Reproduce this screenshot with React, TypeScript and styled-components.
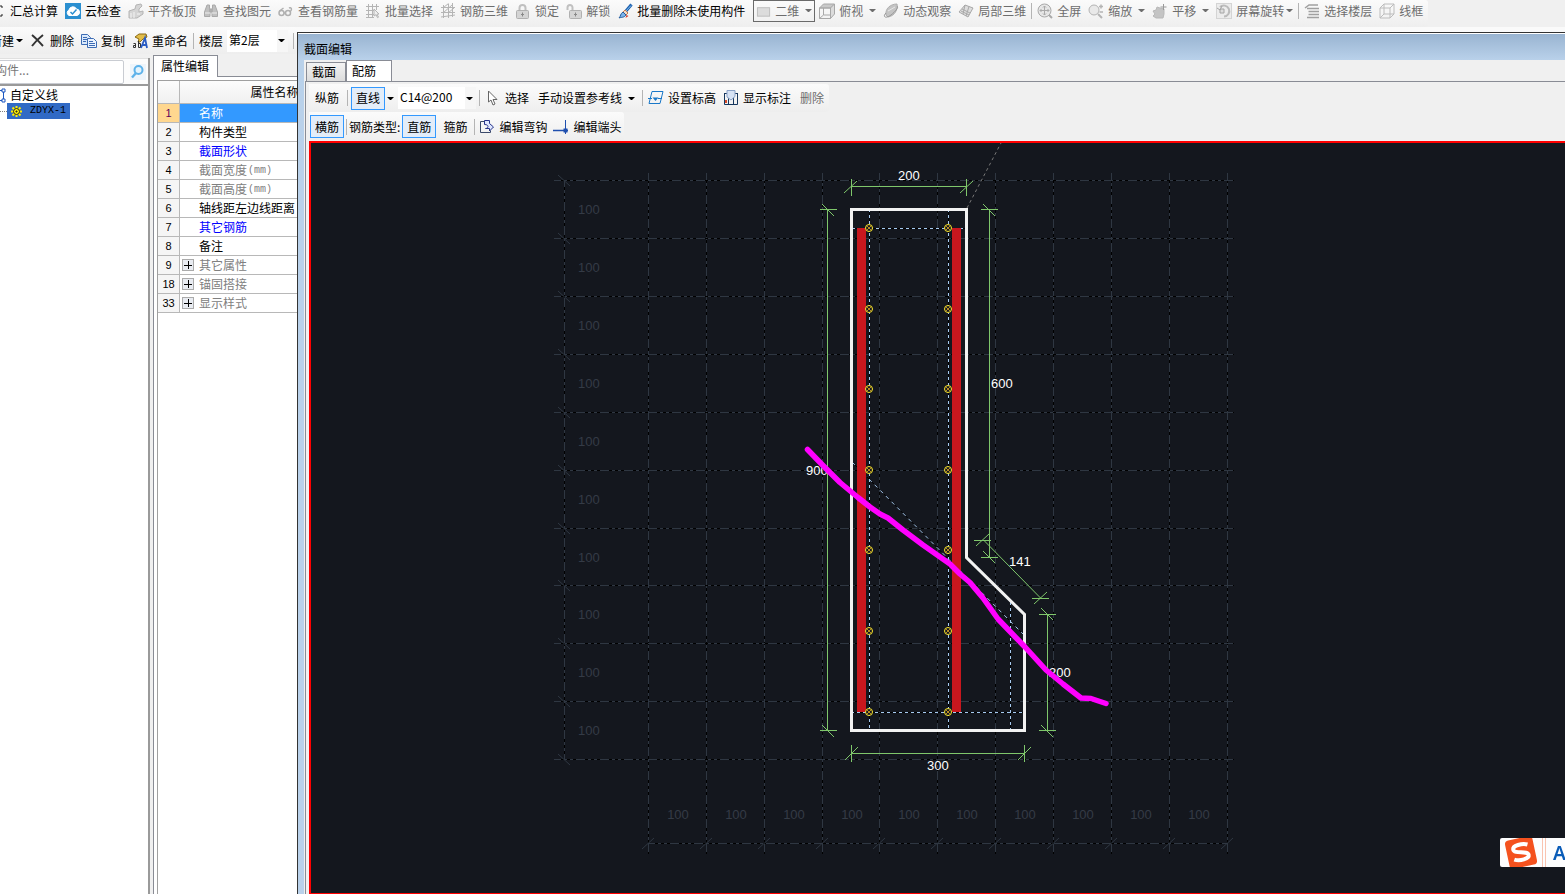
import React from 'react';
import styled, { createGlobalStyle, css } from 'styled-components';

const GlobalStyle = createGlobalStyle`
  * { box-sizing: border-box; }
  body {
    margin: 0;
    background: #f0f0f0;
    color: #000;
    font: 12px/16px "Noto Sans CJK SC", sans-serif;
  }
  button, input, select { font: inherit; color: inherit; }
`;

/* ---------- shell ---------- */
const Shell = styled.div`
  display: flex;
  flex-direction: column;
  height: 100vh;
  overflow: hidden;
`;
const Workspace = styled.main`
  flex: 1;
  display: flex;
  min-height: 0;
  background: linear-gradient(#fafafa 5px, #f0f0f0 5px);
`;
const Explorer = styled.section`
  width: 297px;
  flex: none;
  display: flex;
  flex-direction: column;
  overflow: hidden;
`;
const Panels = styled.div`
  flex: 1;
  display: flex;
  min-height: 0;
`;

/* ---------- toolbars ---------- */
const TopStrip = styled.header`
  height: 27px;
  flex: none;
  overflow: hidden;
  background: #f0f0f0;
`;
const ToolRow = styled.div<{ $h: number; $gap?: number; $shift?: boolean; $inset?: boolean }>`
  display: flex;
  align-items: center;
  width: max-content;
  height: ${p => p.$h}px;
  gap: ${p => p.$gap ?? 7}px;
  padding: 0 5px 6px 0;
  border-radius: 0 3px 3px 0;
  background: linear-gradient(#fbfbfb, #eeeeee);
  ${p => p.$shift && css`margin-left: -10px;`}
  ${p => p.$inset && css`padding: 0 1px;`}
`;
const ExplorerTools = styled(ToolRow)`
  padding-bottom: 0;
`;
const ToolButton = styled.button<{ $off?: boolean; $pad?: number }>`
  display: flex;
  align-items: center;
  gap: 4px;
  flex: none;
  height: 22px;
  padding: 0 ${p => p.$pad ?? 0}px;
  border: 0;
  background: none;
  color: ${p => (p.$off ? '#6d6d6d' : '#000')};
  white-space: nowrap;
`;
const Toggle = styled.button<{ $on?: boolean }>`
  flex: none;
  height: 23px;
  padding: 0 4px;
  border: 1px solid ${p => (p.$on ? '#3399ff' : 'transparent')};
  background: ${p => (p.$on ? '#e3edf9' : 'none')};
  white-space: nowrap;
`;
const Separator = styled.span<{ $snug?: boolean }>`
  flex: none;
  width: 1px;
  height: 16px;
  margin: 0 ${p => (p.$snug ? -2 : 0)}px;
  background: #b4b4b4;
`;
const Caret = styled.i<{ $tight?: boolean }>`
  width: 7px;
  margin-left: ${p => (p.$tight ? -2 : 2)}px;
  border: solid transparent;
  border-width: 3px 3px 0;
  border-top-color: currentColor;
`;
const DropButton = styled.button`
  display: flex;
  padding: 8px 1px;
  border: 0;
  background: none;
`;
const ModeButton = styled(ToolButton)`
  width: 62px;
  padding: 0 2px;
  margin: 0 -3px 0 1px;
  border: 1px solid #6a6a6a;
`;
const ComboBox = styled.span<{ $w: number }>`
  position: relative;
  display: flex;
  align-items: center;
  width: ${p => p.$w}px;
  height: 22px;
  background: linear-gradient(to left, #f6f6f6 11px, #fff 11px);
  & > i { position: absolute; right: 3px; pointer-events: none; }
`;
const Select = styled.select`
  appearance: none;
  width: 100%;
  height: 22px;
  padding: 0 2px 2px;
  border: 0;
  background: none;
`;
const Field = styled.div`
  display: flex;
  align-items: center;
  gap: 4px;
`;
const Label = styled.label`
  white-space: nowrap;
`;

/* ---------- component tree ---------- */
const TreePanel = styled.aside`
  width: 150px;
  flex: none;
  display: flex;
  flex-direction: column;
  margin-top: 4px;
  border-right: 2px solid #9a9a9a;
  background: #fff;
`;
const SearchBar = styled.div`
  display: flex;
  align-items: center;
  gap: 6px;
  height: 28px;
  flex: none;
  margin-left: -40px;
  border-top: 1px solid #e0e0e0;
  border-bottom: 2px solid #9a9a9a;
  background: #fcfcfc;
`;
const SearchInput = styled.input`
  width: 164px;
  height: 24px;
  padding: 0 0 4px 10px;
  border: 1px solid #c9ccd2;
  border-radius: 2px;
  background: #fff;
  &::placeholder { color: #777; opacity: 1; }
`;
const SearchButton = styled.button`
  display: flex;
  padding: 0;
  border: 0;
  background: #eef5fb;
`;
const Tree = styled.ul`
  margin: 0;
  padding: 1px 0;
  list-style: none;
`;
const TreeItem = styled.li`
  display: flex;
  align-items: center;
  gap: 4px;
  height: 16px;
  margin-left: -10px;
`;
const TreeChild = styled.li`
  display: flex;
  align-items: center;
  height: 16px;
  &::before { content: ''; width: 7px; border-top: 1px dotted #808080; }
`;
const TreeSelected = styled.span`
  display: flex;
  align-items: center;
  gap: 8px;
  width: 63px;
  height: 16px;
  padding-left: 4px;
  background: #316ac5;
  font: 10px/18px "Liberation Mono", monospace;
`;

/* ---------- properties ---------- */
const PropertyPanel = styled.section`
  flex: 1;
  min-width: 0;
  display: flex;
  flex-direction: column;
  margin: 1px 0 0 3px;
`;
const PropertyTab = styled.h2`
  align-self: flex-start;
  width: 65px;
  height: 22px;
  margin: 0 0 -1px;
  padding: 0 7px;
  border: 1px solid #898c95;
  border-width: 1px 1px 0;
  background: #fff;
  font: inherit;
  line-height: 19px;
  z-index: 1;
  white-space: nowrap;
`;
const PropertyBody = styled.div`
  flex: 1;
  overflow: hidden;
  padding: 3px 0 0 3px;
  border: 1px solid #898c95;
  border-width: 1px 0 0 1px;
  background: #fff;
`;
const TableClip = styled.div`
  height: 100%;
  overflow: hidden;
  border: 1px solid #a0a0a0;
  border-width: 1px 0 0 1px;
`;
const Table = styled.table`
  width: 212px;
  table-layout: fixed;
  border-collapse: separate;
  border-spacing: 0;
`;
const HeadCell = styled.th<{ $w: number }>`
  width: ${p => p.$w}px;
  height: 23px;
  padding: 0;
  border: solid #b8b8b8;
  border-width: 0 1px 1px 0;
  background: linear-gradient(#fcfcfc, #f0f0f0);
  font-weight: 400;
`;
const NumberCell = styled.th<{ $on?: boolean }>`
  height: 19px;
  padding: 0;
  border: solid #b8b8b8;
  border-width: 0 1px 1px 0;
  background: ${p => (p.$on ? '#ffd78f' : '#f5f5f5')};
  color: ${p => (p.$on ? '#5c005c' : '#000')};
  font: 11px/18px "Liberation Sans", sans-serif;
`;
const NameCell = styled.td<{ $tone: Tone; $on?: boolean }>`
  height: 19px;
  padding: 0 0 0 2px;
  border-bottom: 1px solid #b8b8b8;
  background: ${p => (p.$on ? '#3399ff' : '#fff')};
  color: ${p => ({ black: '#000', blue: '#0000ff', gray: '#808080', white: '#fff' })[p.$tone]};
  line-height: 20px;
  white-space: nowrap;
`;
const NameRow = styled.div`
  display: flex;
  align-items: center;
  height: 18px;
`;
const Expander = styled.span`
  width: 17px;
  flex: none;
  display: flex;
`;
const ExpandButton = styled.button`
  display: flex;
  padding: 0;
  border: 0;
  background: none;
`;
const Unit = styled.span`
  padding: 2px 0 0 1px;
  font: 10px/18px "Liberation Mono", monospace;
`;

/* ---------- section editor ---------- */
const Dialog = styled.section`
  flex: 1;
  min-width: 0;
  display: flex;
  flex-direction: column;
  margin-top: 5px;
  border: 1px solid #333;
  border-width: 1px 0 0 1px;
  background: #b9d1ea;
`;
const DialogTitle = styled.h1`
  height: 27px;
  flex: none;
  margin: 0;
  padding: 7px 6px 0;
  border-top: 1px solid #fff;
  background: linear-gradient(#99b4d1, #b9d1ea);
  font: inherit;
`;
const DialogContent = styled.div`
  flex: 1;
  min-height: 0;
  display: flex;
  flex-direction: column;
  margin-left: 6px;
  background: #f0f0f0;
`;
const Tabs = styled.div`
  display: flex;
  align-items: flex-end;
  height: 21px;
  flex: none;
  padding-left: 2px;
`;
const Tab = styled.button<{ $on?: boolean }>`
  width: ${p => (p.$on ? 46 : 40)}px;
  height: ${p => (p.$on ? 21 : 19)}px;
  padding: 0 0 0 5px;
  border: 1px solid #898c95;
  border-bottom-width: 0;
  background: ${p => (p.$on ? '#fff' : 'linear-gradient(#f3f3f3, #dcdcdc)')};
  line-height: 18px;
  text-align: left;
  white-space: nowrap;
`;
const TabPage = styled.div`
  flex: 1;
  min-height: 0;
  display: flex;
  flex-direction: column;
  margin-left: 1px;
  padding: 2px 0 0 3px;
  border: 1px solid #898c95;
  border-width: 1px 0 0 1px;
`;
const EditorTools = styled.div`
  display: flex;
  flex-direction: column;
  flex: none;
  height: 57px;
`;
const Canvas = styled.div`
  flex: 1;
  min-height: 0;
  border: solid #ff0000;
  border-width: 2px 0 1px 2px;
  background: #14171e;
`;
const Drawing = styled.svg`
  display: block;
  width: 100%;
  height: 100%;
  font: 13px "Liberation Sans", sans-serif;
`;
const ImeBar = styled.div`
  position: fixed;
  right: 0;
  bottom: 27px;
  display: flex;
  width: 65px;
  height: 29px;
  overflow: hidden;
  border-radius: 2px 0 0 2px;
  background: #fdfdfe;
`;

/* ---------- icons ---------- */
type Tone = 'black' | 'blue' | 'gray' | 'white';

const G = '#a9a9a9';
const L = '#d4d4d4';
const glyphs: Record<string, React.ReactNode> = {
  sum: <path d="M12 5V3H3l5 5-5 5h9v-2" stroke="#222" />,
  cloud: (
    <g>
      <rect width="16" height="16" fill="#2b8fd0" stroke="none" />
      <path d="M4 12.5a3 3 0 0 1 0-5.500A4 4 0 0 1 11.500 6a3.300 3.300 0 0 1 .5 6.500z" fill="#fff" stroke="#fff" />
      <path d="M5.500 9l2 2 4-4.500" stroke="#2b8fd0" strokeWidth="1.500" />
    </g>
  ),
  align: (
    <g stroke="#b4b4b4">
      <path d="M1 8l6-2 1-4 5-1 1 2-3 3v3l4-1v3l-6 4H1z" fill={L} />
      <path d="M3 10v5M6 9v6M9 11h3" stroke="#f4f4f4" />
    </g>
  ),
  find: (
    <g fill="#c0c0c0" stroke={G}>
      <path d="M4 2h2.500v3L7 7v6.500H1.500V9zM12 2H9.500v3L9 7v6.500h5.500V9zM7 6h2v3H7z" />
      <path d="M2 10h5M9 10h5" stroke="#eee" />
    </g>
  ),
  glasses: (
    <g stroke="#b0b0b0" strokeWidth="1.500">
      <circle cx="3.500" cy="10" r="2.500" /><circle cx="10" cy="10" r="2.500" />
      <path d="M1.500 8l4-3M12 9c3-3 1-5-1-4M6 10h1.500" />
    </g>
  ),
  batch: (
    <g stroke="#b4b4b4">
      <path d="M1 3.500h13M1 7.500h8M1 11.500h8M1 14.500h8M3.500 1v14M7.500 1v14M11.500 1v6" />
      <path d="M9 6l5 5-2 .2 1.500 3-1 .5-1.500-3L9 13z" fill="#eee" />
    </g>
  ),
  rebar: <path d="M1 4.500h14M1 9.500h14M1 14l14-2M3.500 2v13M8.500 1v14M12.500 0v14M3.500 4.500l5-4M3 10l9-8M8 10l6-5" stroke="#b5b5b5" />,
  lock: (
    <g stroke="#b0b0b0">
      <path d="M4.500 8V5a3 3 0 0 1 6 0v3" strokeWidth="2" stroke="#c0c0c0" />
      <rect x="1.500" y="7.500" width="12" height="8" rx="1" fill={L} />
      <path d="M7.500 9.500v4M6 11.500h3" stroke="#888" />
    </g>
  ),
  unlock: (
    <g stroke="#b0b0b0">
      <path d="M1.500 7V4.500a2.500 2.500 0 0 1 5 0V7" strokeWidth="2" stroke="#c0c0c0" />
      <rect x="3.500" y="7.500" width="12" height="8" rx="1" fill={L} />
      <path d="M9.500 9.500v4M8 11.500h3" stroke="#888" />
    </g>
  ),
  brush: (
    <g>
      <path d="M14.500 1.500L9 8" stroke="#1d5fae" strokeWidth="3" />
      <path d="M14 2.500L9 8" stroke="#7fc2f2" />
      <path d="M8 7l3 3-2 2-3-3z" fill="#f3dcc8" stroke="#c67d50" />
      <path d="M6 9l3 3c-2 3-5 2-7 3 2-2 1-4 4-6z" fill="#7db4ea" stroke="#235c9e" />
      <path d="M9.500 12l2 1-3 2z" fill="#d43c2c" stroke="none" />
    </g>
  ),
  plane: <rect x="1.500" y="4.500" width="13" height="9" fill="#dcdcdc" stroke="#bdbdbd" />,
  cube: (
    <g stroke="#a8a8a8">
      <path d="M.5 5l4-4h11l-4 4z" fill="#c9c9c9" />
      <path d="M11.500 5l4-4v10l-4 4.500z" fill="#dcdcdc" />
      <path d="M.5 5h11v10.500H.5zM4.500 5v7h7M.5 15.500l4-3.500" />
    </g>
  ),
  orbit: (
    <g stroke="#b0b0b0">
      <path d="M3 12C2 6 7 1 14 1c1 5-2 12-9 13z" fill="#c4c4c4" />
      <path d="M3 10c-4 4 0 6 5 2s8-8 6-9" stroke="#999" /><path d="M5 8l7-4" stroke="#e8e8e8" />
    </g>
  ),
  local3d: (
    <g stroke={G}>
      <path d="M1 9l6-7 8 3-5 9z" fill="#dedede" />
      <path d="M4 6l8 4M7 2l-2 9M11 3.500L8 13M3 8l8 4" />
    </g>
  ),
  full: (
    <g stroke={G}>
      <circle cx="7.500" cy="7.500" r="6.500" fill="#e6e6e6" />
      <path d="M7.500 3v9M3 7.500h9M6 4.500L7.500 3 9 4.500M6 10.500L7.500 12 9 10.500M4.500 6L3 7.500 4.500 9M10.500 6L12 7.500 10.500 9" />
      <path d="M12 12l3 3" strokeWidth="2" />
    </g>
  ),
  zoom: (
    <g stroke="#b4b4b4">
      <circle cx="6" cy="7" r="5" fill="#e9e9e9" />
      <path d="M10 11l4 4" strokeWidth="2" />
      <path d="M11 3.500h4M13 1.500v4M11.500 9h3.500" strokeWidth="1.500" />
    </g>
  ),
  pan: (
    <g stroke="#b8b8b8">
      <path d="M1 8l3-1 1-3 3 1 4 1v5l-1 4H4l-3-2 2-2z" fill="#c4c4c4" />
      <path d="M11.500 1v6M8.500 4h6" stroke="#999" />
    </g>
  ),
  rotate: (
    <g stroke="#a4a4a4">
      <rect x=".5" y=".5" width="15" height="15" fill="#ececec" stroke={L} />
      <path d="M4 4a5.500 5.500 0 1 1 4 9.500" strokeWidth="2" stroke="#bbb" />
      <path d="M4 6h4v4H4z" fill="#ddd" /><path d="M1 5l3 2 2-4" />
    </g>
  ),
  floors: <path d="M1 5L5 2h9M3 5.500h12M4.500 8.500H15M4.500 11.500H15M3 14.500h12" stroke="#a0a0a0" strokeWidth="1.500" />,
  wire: <path d="M1 5l4-4h10v10l-4 4H1zM1 5h10v10M11 5l4-4M5 1v10h10M1 15l4-4" stroke="#bcbcbc" />,
  cross: <path d="M2 2c4 3 7 7 11 11M13 2C9 5 5 9 2 13" stroke="#333" strokeWidth="2" />,
  copy: (
    <g stroke="#3d6cb4">
      <path d="M.5 1.500h6l3 3v7h-9z" fill="#dceafb" />
      <path d="M2 4.500h4M2 6.500h4M2 8.500h3" />
      <path d="M6.500 5.500h6l3 3v6h-9z" fill="#eaf3ff" />
      <path d="M8 8.500h4M8 10.500h6M8 12.500h6" />
    </g>
  ),
  rename: (
    <g>
      <path d="M3 4l4-3h7l1 3-4 2-3 3H6l1-3z" fill="#e2bd49" stroke="#8c6b15" />
      <path d="M1.500 10.500h2v4h-2v-2h2M6.500 8v6.500h2v-4h-2" stroke="#333" />
      <path d="M9 15l4-10 2 10M10.500 12H15" stroke="#2a5cc4" strokeWidth="1.800" />
    </g>
  ),
  search: (
    <g stroke="#5db2ea">
      <circle cx="8.500" cy="6" r="4" fill="#e3f3fd" strokeWidth="2" />
      <path d="M6 9l-4 4.500" strokeWidth="2.400" />
    </g>
  ),
  line: (
    <g stroke="#1c57c0">
      <path d="M3 3.500h9M3 13.500h9M13.500 4v9" />
      <path d="M12 2h3v3h-3zM12 12h3v3h-3z" fill="#fff" />
    </g>
  ),
  gear: (
    <g>
      <path d="M5.500 0v11M0 5.500h11M1.500 1.500l8 8M9.500 1.500l-8 8" stroke="#ffee00" strokeWidth="2" />
      <circle cx="5.500" cy="5.500" r="3" fill="#fff200" stroke="#222" />
      <path d="M5 5h1v1H5z" stroke="#222" />
    </g>
  ),
  plus: (
    <g>
      <rect x=".5" y=".5" width="11" height="11" fill="#e9ecf2" stroke="#ababab" />
      <path d="M2 6.500h8M6.500 2v8" stroke="#000" />
    </g>
  ),
  pointer: <path d="M3.500 1v11l2.500-2 2 5 2-1-2-4.500h4z" fill="#fff" stroke="#666" />,
  level: (
    <g stroke="#1a78c8">
      <path d="M4 1.500h11l-3 12H1zM0 8.500h4M10 8.500h4" />
      <path d="M4.500 7.500h6l-3 3.500z" fill="#1a78c8" stroke="none" />
    </g>
  ),
  note: (
    <g stroke="#17375e">
      <path d="M1.500 3v11.500h13V3M5.500 7v7M10.500 7v7M1.500 3.500H4M12 3.500h2.500" />
      <path d="M4 .5h8v6L8 10 4 7z" fill="#d6e2f4" stroke="#8aa2c8" />
      <path d="M2 10h2v3H2z" fill="#d64b2a" stroke="none" />
    </g>
  ),
  hook: (
    <g stroke="#27348b">
      <path d="M5 2.500H1.500v11h10v-2" stroke="#3b4a6b" />
      <path d="M5.500 1.500h5v3l4 3.500-4 4V9.500h-4c3 0 4-4-1-4z" fill="#dfe7ff" />
    </g>
  ),
  endpoint: (
    <g stroke="#1f4fae">
      <path d="M0 11.500h15" strokeWidth="1.500" />
      <path d="M12.500 1v14" />
      <path d="M10.500 9.500h4v4h-4z" fill="#1f4fae" stroke="none" />
    </g>
  ),
};

function Icon({ name, size = 16 }: { name: string; size?: number }) {
  return (
    <svg width={size} height={size} viewBox={`0 0 ${size} ${size}`} fill="none" aria-hidden="true">
      {glyphs[name]}
    </svg>
  );
}

type ToolProps = { icon: string; label: string; off?: boolean; drop?: boolean; tight?: boolean; pad?: number };
function Tool({ icon, label, off, drop, tight, pad }: ToolProps) {
  return (
    <ToolButton $off={off} $pad={pad}>
      <Icon name={icon} />
      {label}
      {drop && <Caret $tight={tight} />}
    </ToolButton>
  );
}

/* ---------- section drawing ---------- */
const cols = [648, 706, 764, 822, 879, 937, 995, 1053, 1111, 1169, 1227];
const rows = [180, 238, 296, 354, 412, 470, 528, 585, 643, 701, 759];
const bars = [228, 309, 389, 470, 550, 631, 712];

function GridLine({ d }: { d: string }) {
  return (
    <g fill="none" shapeRendering="crispEdges">
      <path d={d} stroke="#2f3742" />
      <path d={d} stroke="#000" strokeDasharray="3 3 3 3 3 9" strokeDashoffset="-7" />
    </g>
  );
}

function SectionDrawing() {
  return (
    <Drawing role="img" aria-label="截面配筋图">
      <g transform="translate(-311 -143)">
        {cols.map(x => <GridLine key={x} d={`M${x}.5 173V854`} />)}
        {rows.map(y => <GridLine key={y} d={`M554 ${y}.5H1234`} />)}
        <GridLine d="M564.5 180V760" />
        <GridLine d="M648 843.5H1228" />
        <g stroke="#2f3742">
          {rows.map(y => <path key={y} d={`M558 ${y - 5}l12 11`} />)}
          {cols.map(x => <path key={x} d={`M${x - 6} 849l12 -11`} />)}
        </g>
        <g fill="#343b46">
          {rows.slice(1).map((y, i) => <text key={y} x="578" y={Math.round((y + rows[i]) / 2) + 5}>100</text>)}
          {cols.slice(1).map((x, i) => <text key={x} x={Math.round((x + cols[i]) / 2) + 1} y="819" textAnchor="middle">100</text>)}
        </g>

        <g fill="none" stroke="#a6caf0">
          <path
            d="M869.5 209V730M948.5 209V730M1010.5 602V730M852 228.5H967M851 712.5H1024M852 462L1024 635"
            stroke="#000"
          />
          <path d="M869.5 209V730M948.5 209V730M1010.5 602V730M852 228.5H967M851 712.5H1024" strokeDasharray="3 3" shapeRendering="crispEdges" />
          <path d="M852 462L1024 635" strokeDasharray="4 4" />
          <path d="M967 208L1001 143" stroke="#777" strokeDasharray="3 3" />
        </g>
        <path d="M857 228h9v484h-9zM952 228h9v484h-9z" fill="#c8171e" />
        <path d="M851.5 209.5H966.5V557.5L1024.500 614.500V730.5H851.5z" fill="none" stroke="#f2f2f2" strokeWidth="3" />

        <g stroke="#7fc76b" fill="none">
          <path d="M851.5 186.500H966.5M827.500 209.500V730.500M989.500 209.500V557.500M1047.500 614.500V730.500M851.5 753.500H1024.500M984 540.500L1041 598.500" />
          <path d="M851.500 179v17M966.500 179v17M851.500 745v17M1024.500 745v17" />
          <path d="M820 209.500h17M820 730.500h17M981 209.500h17M981 557.500h17M1039 614.500h17M1039 730.500h17M974 540.500h17M1032 598.500h17" />
          <path d="M844 193l13-12M960 193l13-12M845 760l13-13M1018 760l13-13M976 546l13-12M1034 604l13-12" />
          <path d="M822 204l12 12M822 725l12 12M983 204l12 12M983 551l12 12M1041 608l12 12M1041 725l12 12" />
        </g>

        {[869, 948].map(x => bars.map(y => (
          <g key={`${x}-${y}`} stroke="#ffe92c" fill="none">
            <circle cx={x} cy={y} r="3.500" fill="#14171e" />
            <path d={`M${x - 2} ${y - 2}l4 4M${x + 2} ${y - 2}l-4 4`} stroke="#b88a22" />
          </g>
        )))}

        <g fill="#fff">
          <text x="898" y="180">200</text>
          <text x="991" y="388">600</text>
          <text x="806" y="475">900</text>
          <text x="1009" y="566">141</text>
          <text x="1049" y="677">200</text>
          <text x="927" y="770">300</text>
        </g>
        <polyline
          points="807.5,449.5 822.5,465 840,482.5 858,497.5 870,507 880,514 888,518 903,530 923,545 950,564 960,574 970,582.5 983,598 998,619 1010,631.5 1025,647 1046,670 1063,684 1081,698 1091,698.5 1106,703.5"
          fill="none"
          stroke="#ff00ff"
          strokeWidth="5.5"
          strokeLinecap="round"
          strokeLinejoin="round"
        />
      </g>
    </Drawing>
  );
}

/* ---------- data ---------- */
const properties: { n: number; name: string; tone: Tone; unit?: string; group?: boolean }[] = [
  { n: 1, name: '名称', tone: 'white' },
  { n: 2, name: '构件类型', tone: 'black' },
  { n: 3, name: '截面形状', tone: 'blue' },
  { n: 4, name: '截面宽度', tone: 'gray', unit: '(mm)' },
  { n: 5, name: '截面高度', tone: 'gray', unit: '(mm)' },
  { n: 6, name: '轴线距左边线距离', tone: 'black' },
  { n: 7, name: '其它钢筋', tone: 'blue' },
  { n: 8, name: '备注', tone: 'black' },
  { n: 9, name: '其它属性', tone: 'gray', group: true },
  { n: 18, name: '锚固搭接', tone: 'gray', group: true },
  { n: 33, name: '显示样式', tone: 'gray', group: true },
];

export default function App() {
  return (
    <>
      <GlobalStyle />
      <Shell>
        <TopStrip>
          <ToolRow $h={27} $shift>
            <Tool icon="sum" label="汇总计算" />
            <Tool icon="cloud" label="云检查" />
            <Tool icon="align" label="平齐板顶" off />
            <Tool icon="find" label="查找图元" off />
            <Tool icon="glasses" label="查看钢筋量" off />
            <Tool icon="batch" label="批量选择" off />
            <Tool icon="rebar" label="钢筋三维" off />
            <Tool icon="lock" label="锁定" off />
            <Tool icon="unlock" label="解锁" off />
            <Tool icon="brush" label="批量删除未使用构件" />
            <ModeButton $off><Icon name="plane" />二维<Caret /></ModeButton>
            <Tool icon="cube" label="俯视" off drop />
            <Tool icon="orbit" label="动态观察" off />
            <Tool icon="local3d" label="局部三维" off />
            <Separator $snug />
            <Tool icon="full" label="全屏" off />
            <Tool icon="zoom" label="缩放" off drop />
            <Tool icon="pan" label="平移" off drop />
            <Tool icon="rotate" label="屏幕旋转" off drop tight />
            <Separator $snug />
            <Tool icon="floors" label="选择楼层" off />
            <Tool icon="wire" label="线框" off />
          </ToolRow>
        </TopStrip>
        <Workspace>
          <Explorer>
            <ExplorerTools $h={27} $shift>
              <ToolButton>新建<Caret $tight /></ToolButton>
              <Tool icon="cross" label="删除" />
              <Tool icon="copy" label="复制" />
              <Tool icon="rename" label="重命名" />
              <Separator $snug />
              <Field>
                <Label htmlFor="floor">楼层</Label>
                <ComboBox $w={61}>
                  <Select id="floor" defaultValue="2"><option value="2">第2层</option></Select>
                  <Caret />
                </ComboBox>
              </Field>
              <Separator $snug />
            </ExplorerTools>
            <Panels>
              <TreePanel>
                <SearchBar>
                  <SearchInput aria-label="搜索构件" placeholder="搜索构件..." />
                  <SearchButton aria-label="搜索"><Icon name="search" /></SearchButton>
                </SearchBar>
                <Tree>
                  <TreeItem><Icon name="line" />自定义线</TreeItem>
                  <TreeChild><TreeSelected><Icon name="gear" size={11} />ZDYX-1</TreeSelected></TreeChild>
                </Tree>
              </TreePanel>
              <PropertyPanel>
                <PropertyTab>属性编辑</PropertyTab>
                <PropertyBody>
                  <TableClip>
                    <Table>
                      <thead>
                        <tr><HeadCell $w={22} /><HeadCell $w={190}>属性名称</HeadCell></tr>
                      </thead>
                      <tbody>
                        {properties.map(p => (
                          <tr key={p.n}>
                            <NumberCell scope="row" $on={p.n === 1}>{p.n}</NumberCell>
                            <NameCell $tone={p.tone} $on={p.n === 1}>
                              <NameRow>
                                <Expander>
                                  {p.group && <ExpandButton aria-label={`展开${p.name}`}><Icon name="plus" size={12} /></ExpandButton>}
                                </Expander>
                                {p.name}
                                {p.unit && <Unit>{p.unit}</Unit>}
                              </NameRow>
                            </NameCell>
                          </tr>
                        ))}
                      </tbody>
                    </Table>
                  </TableClip>
                </PropertyBody>
              </PropertyPanel>
            </Panels>
          </Explorer>

          <Dialog aria-label="截面编辑">
            <DialogTitle>截面编辑</DialogTitle>
            <DialogContent>
              <Tabs role="tablist">
                <Tab role="tab">截面</Tab>
                <Tab role="tab" $on aria-selected="true">配筋</Tab>
              </Tabs>
              <TabPage>
                <EditorTools>
                  <ToolRow $h={28} $gap={3} $inset>
                    <Toggle>纵筋</Toggle>
                    <Separator />
                    <Toggle $on>直线</Toggle>
                    <DropButton aria-label="直线选项"><Caret $tight /></DropButton>
                    <ComboBox $w={78}>
                      <Select aria-label="钢筋规格" defaultValue="a"><option value="a">C14@200</option></Select>
                      <Caret />
                    </ComboBox>
                    <Separator />
                    <Tool icon="pointer" label="选择" pad={2} />
                    <ToolButton $pad={4}>手动设置参考线<Caret /></ToolButton>
                    <Separator />
                    <Tool icon="level" label="设置标高" pad={2} />
                    <Tool icon="note" label="显示标注" pad={2} />
                    <ToolButton $off $pad={4}>删除</ToolButton>
                  </ToolRow>
                  <ToolRow $h={29} $gap={2} $inset>
                    <Toggle $on>横筋</Toggle>
                    <Separator />
                    <span>钢筋类型:</span>
                    <Toggle $on>直筋</Toggle>
                    <Toggle>箍筋</Toggle>
                    <Separator />
                    <Tool icon="hook" label="编辑弯钩" pad={2} />
                    <Tool icon="endpoint" label="编辑端头" pad={2} />
                  </ToolRow>
                </EditorTools>
                <Canvas><SectionDrawing /></Canvas>
              </TabPage>
            </DialogContent>
          </Dialog>
        </Workspace>
        <ImeBar>
          <svg width="65" height="29" viewBox="0 0 65 29" role="img" aria-label="输入法">
            <g transform="rotate(-12 21 14.500)">
              <rect x="7" y="0" width="28" height="29" rx="4" fill="#f4511e" />
              <path d="M29 8c-5-2.500-15-2-15 2 0 5 14 3.500 14 8.500 0 4-10 4.500-15 1.500" fill="none" stroke="#fff" strokeWidth="4" />
            </g>
            <path d="M42.500 0v29M45.500 0v29" stroke="#f9c3b0" />
            <text x="53" y="22" fill="#0a5cb8" fontSize="19" fontFamily="Noto Sans, sans-serif" fontWeight="600">A</text>
          </svg>
        </ImeBar>
      </Shell>
    </>
  );
}
